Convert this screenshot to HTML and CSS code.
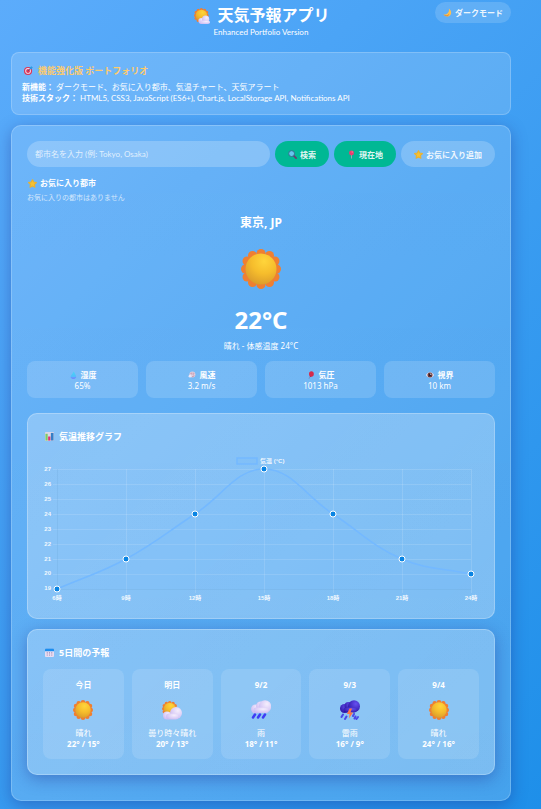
FILE: index.html
```html
<!DOCTYPE html>
<html lang="ja">
<head>
<meta charset="utf-8">
<meta name="viewport" content="width=device-width, initial-scale=1">
<title>天気予報アプリ</title>
<link rel="stylesheet" href="styles.css">
</head>
<body>
<svg class="sprite" aria-hidden="true">
  <defs>
    <radialGradient id="g-sun" cx=".6" cy=".25" r=".8"><stop offset="0" stop-color="#ffd53b"/><stop offset=".5" stop-color="#f6bd2c"/><stop offset="1" stop-color="#d99a2b"/></radialGradient>
    <radialGradient id="g-cloud" cx=".65" cy=".3" r=".8"><stop offset="0" stop-color="#f5eefd"/><stop offset="1" stop-color="#c9b8f2"/></radialGradient>
    <radialGradient id="g-storm" cx=".65" cy=".3" r=".8"><stop offset="0" stop-color="#6550f0"/><stop offset="1" stop-color="#2a12a0"/></radialGradient>
    <linearGradient id="g-drop" x1="0" y1="0" x2="0" y2="1"><stop offset="0" stop-color="#42d8f4"/><stop offset="1" stop-color="#5cb0ff"/></linearGradient>
    <symbol id="i-sun" viewBox="0 0 40 40">
      <g fill="#ef7f31"><circle cx="20" cy="4.5" r="4.5"/><circle cx="28.500" cy="6.500" r="4.500"/><circle cx="34" cy="12" r="4.500"/><circle cx="35.500" cy="20" r="4.500"/><circle cx="34" cy="28" r="4.500"/><circle cx="28.500" cy="33.500" r="4.500"/><circle cx="20" cy="35.500" r="4.500"/><circle cx="11.500" cy="33.500" r="4.500"/><circle cx="6" cy="28" r="4.500"/><circle cx="4.500" cy="20" r="4.500"/><circle cx="6" cy="12" r="4.500"/><circle cx="11.500" cy="6.500" r="4.500"/></g>
      <circle cx="20" cy="20" r="15.500" fill="url(#g-sun)"/>
    </symbol>
    <symbol id="i-suncloud" viewBox="0 0 40 40">
      <use href="#i-sun" x="0" y="2" width="31" height="31"/>
      <g fill="url(#g-cloud)"><circle cx="10" cy="31" r="8"/><circle cx="28" cy="26" r="12"/><rect x="8" y="27" width="25" height="12" rx="6"/></g>
    </symbol>
    <symbol id="i-suncloud-small" viewBox="0 0 40 40">
      <use href="#i-sun" x="0" y="0" width="37" height="37"/>
      <g fill="url(#g-cloud)"><circle cx="18" cy="32" r="7"/><circle cx="29" cy="28" r="9"/><rect x="13" y="31" width="27" height="9" rx="5"/></g>
    </symbol>
    <symbol id="i-rain" viewBox="0 0 40 40">
      <g fill="url(#g-cloud)"><circle cx="9" cy="18" r="9"/><circle cx="19" cy="12" r="9"/><circle cx="28" cy="13" r="12.500"/><rect x="5" y="15" width="30" height="11" rx="5"/></g>
      <path d="M8 29 4 35M18 29l-4 6M28 29l-4 6" stroke="#3f3cf5" stroke-width="5" stroke-linecap="round"/>
    </symbol>
    <symbol id="i-storm" viewBox="0 0 40 40">
      <g fill="url(#g-storm)"><circle cx="9" cy="17" r="9"/><circle cx="17" cy="12" r="8"/><circle cx="28" cy="12.500" r="12"/><rect x="7" y="15" width="26" height="10" rx="5"/></g>
      <path d="M6 29 3 34M13 33l-3 5M28 28l-2 4M36 34l-3 4M31 33l-2 4" stroke="#4a49e8" stroke-width="4" stroke-linecap="round"/>
      <path d="M19 17 14 28h5l-1 9 8-12h-5l3-8z" fill="#ff7548"/>
    </symbol>
    <symbol id="i-moon" viewBox="0 0 20 20"><path d="M13 1c5 4 7 10 3 15-4 4-11 4-15-2 7 2 14-4 12-13z" fill="#ffc04d"/><path d="M1 14c4 3 10 3 13-2 0 5-4 7-8 6-2-1-4-2-5-4z" fill="#e08b38"/></symbol>
    <symbol id="i-target" viewBox="0 0 20 20"><circle cx="9" cy="11" r="9" fill="#dc3557"/><circle cx="9" cy="11" r="6.300" fill="#f0e4f3"/><circle cx="9" cy="11" r="4.300" fill="#dc3557"/><path d="m9 11 6-6" stroke="#4d3a75" stroke-width="1.500"/><path d="m13 4 4-4v3h3l-4 4h-3z" fill="#2696df"/></symbol>
    <symbol id="i-star" viewBox="0 0 20 20"><path d="m10 1.500 2.800 5.300 6 1-4.300 4.200.9 6.300L10 15.500l-5.400 2.800.9-6.300L1.200 7.800l6-1z" fill="#f4c132" stroke="#e9b12f" stroke-width="2.400" stroke-linejoin="round"/></symbol>
    <symbol id="i-search" viewBox="0 0 20 20"><path d="m12 12 6 6" stroke="#683f73" stroke-width="4" stroke-linecap="round"/><circle cx="8" cy="8" r="6.500" fill="#65c6ed" stroke="#38658c" stroke-width="2"/></symbol>
    <symbol id="i-pin" viewBox="0 0 20 20"><path d="M10 9v10" stroke="#a9a1b7" stroke-width="2"/><circle cx="10" cy="6.500" r="5.500" fill="#ee3c70"/><circle cx="11.500" cy="4.500" r="1.500" fill="#ff82a0"/></symbol>
    <symbol id="i-drop" viewBox="0 0 20 20"><path d="M12 1c1 5 6 8 6 12 0 9-14 9-14 1 0-5 6-7 8-13z" fill="url(#g-drop)"/><path d="M4 15c3 2 10 2 14 0-1 6-13 6-14 0z" fill="#7481ff"/></symbol>
    <symbol id="i-wind" viewBox="0 0 20 20"><circle cx="11" cy="9" r="7.500" fill="#dfcede"/><circle cx="5" cy="13" r="3.500" fill="#eee5f5"/><path d="M6 6c3-2 5 0 4 3m3-5c2 2 2 4 0 5m-3 5c3 1 5-1 5-3" fill="none" stroke="#ba7790" stroke-width="1.600"/></symbol>
    <symbol id="i-balloon" viewBox="0 0 20 20"><path d="M8 14c-3 2 0 3-3 5" fill="none" stroke="#7b6e96" stroke-width="1.500"/><ellipse cx="11" cy="7.500" rx="6" ry="7" fill="#d52b4b"/><path d="m6 15 3-3 2 3z" fill="#b32452"/></symbol>
    <symbol id="i-eye" viewBox="0 0 20 20"><path d="M0 10c5-9 15-9 20 0-5 9-15 9-20 0z" fill="#f1e7f2"/><circle cx="10" cy="10" r="6.300" fill="#6e3b3b"/><circle cx="10" cy="10" r="3" fill="#291e30"/><circle cx="12" cy="8" r="1.500" fill="#fff"/></symbol>
    <symbol id="i-chart" viewBox="0 0 20 20"><rect width="20" height="20" rx="1.500" fill="#ddd7e7"/><path d="M1 4h5v15H1z" fill="#7dcc68"/><path d="M7 10h5v9H7z" fill="#df2f76"/><path d="M13 2h6v17h-6z" fill="#347ec6"/></symbol>
    <symbol id="i-calendar" viewBox="0 0 20 20"><rect y="1" width="20" height="19" rx="2" fill="#e7dcf1"/><path d="M0 7V3q0-2 2-2h16q2 0 2 2v4z" fill="#198ef0"/><path d="M5 9v8M10 9v8M15 9v8" stroke="#a28bb5" stroke-width="2" stroke-dasharray="2 1"/></symbol>
  </defs>
</svg>

<div class="page">
  <header class="header">
    <div class="brand">
      <h1 class="brand-title"><svg class="brand-icon" aria-hidden="true"><use href="#i-suncloud-small"/></svg>天気予報アプリ</h1>
      <p class="brand-sub">Enhanced Portfolio Version</p>
    </div>
    <button class="theme-btn" type="button"><svg class="icon" aria-hidden="true"><use href="#i-moon"/></svg>ダークモード</button>
  </header>

  <section class="intro">
    <h2 class="section-title accent"><svg class="icon" aria-hidden="true"><use href="#i-target"/></svg>機能強化版 ポートフォリオ</h2>
    <p><strong>新機能：</strong> ダークモード、お気に入り都市、気温チャート、天気アラート</p>
    <p><strong>技術スタック：</strong> HTML5, CSS3, JavaScript (ES6+), Chart.js, LocalStorage API, Notifications API</p>
  </section>

  <main class="weather">
    <form class="search">
      <input class="search-input" type="text" aria-label="都市名" placeholder="都市名を入力 (例: Tokyo, Osaka)">
      <button class="btn primary" type="button"><svg class="icon" aria-hidden="true"><use href="#i-search"/></svg>検索</button>
      <button class="btn primary" type="button"><svg class="icon" aria-hidden="true"><use href="#i-pin"/></svg>現在地</button>
      <button class="btn" type="button"><svg class="icon" aria-hidden="true"><use href="#i-star"/></svg>お気に入り追加</button>
    </form>

    <section class="favorites">
      <h2 class="favorites-title"><svg class="icon" aria-hidden="true"><use href="#i-star"/></svg>お気に入り都市</h2>
      <p class="favorites-empty">お気に入りの都市はありません</p>
    </section>

    <section class="current">
      <h2 class="city">東京, JP</h2>
      <svg class="current-icon" aria-hidden="true"><use href="#i-sun"/></svg>
      <p class="temperature">22°C</p>
      <p class="summary">晴れ - 体感温度 24°C</p>
    </section>

    <dl class="stats">
      <div class="stat"><dt><svg class="icon" aria-hidden="true"><use href="#i-drop"/></svg>湿度</dt><dd>65%</dd></div>
      <div class="stat"><dt><svg class="icon" aria-hidden="true"><use href="#i-wind"/></svg>風速</dt><dd>3.2 m/s</dd></div>
      <div class="stat"><dt><svg class="icon" aria-hidden="true"><use href="#i-balloon"/></svg>気圧</dt><dd>1013 hPa</dd></div>
      <div class="stat"><dt><svg class="icon" aria-hidden="true"><use href="#i-eye"/></svg>視界</dt><dd>10 km</dd></div>
    </dl>

    <section class="panel">
      <h2 class="section-title"><svg class="icon" aria-hidden="true"><use href="#i-chart"/></svg>気温推移グラフ</h2>
      <svg class="graph" viewBox="0 0 436 148" role="img" aria-label="気温 (°C)">
        <path class="grid" d="M10 14.500H428M10 29.500H428M10 44.500H428M10 59.500H428M10 74.500H428M10 89.500H428M10 104.500H428M10 119.500H428M83.500 14V138M152.500 14V138M221.500 14V138M290.500 14V138M359.500 14V138M428.500 14V138"/>
        <path class="axis" d="M14.500 14V138M10 134.500H428"/>
        <path class="area" d="M14 134C41.600 122 56.600 118.300 83 104C111.800 88.300 124.400 77 152 59C179.600 41 193.400 14 221 14C248.600 14 262.400 41 290 59C317.600 77 329.300 91.100 359 104C384.500 115.100 400.400 113 428 119V134H14Z"/>
        <path class="line" d="M14 134C41.600 122 56.600 118.300 83 104C111.800 88.300 124.400 77 152 59C179.600 41 193.400 14 221 14C248.600 14 262.400 41 290 59C317.600 77 329.300 91.100 359 104C384.500 115.100 400.400 113 428 119"/>
        <rect class="legend" x="194" y="3" width="20" height="6"/>
        <text x="217" y="8">気温 (°C)</text>
        <g class="points"><circle cx="14" cy="134" r="3"/><circle cx="83" cy="104" r="3"/><circle cx="152" cy="59" r="3"/><circle cx="221" cy="14" r="3"/><circle cx="290" cy="59" r="3"/><circle cx="359" cy="104" r="3"/><circle cx="428" cy="119" r="3"/></g>
        <g class="ticks-y"><text x="8" y="16">27</text><text x="8" y="31">26</text><text x="8" y="46">25</text><text x="8" y="61">24</text><text x="8" y="76">23</text><text x="8" y="91">22</text><text x="8" y="106">21</text><text x="8" y="120">20</text><text x="8" y="135">19</text></g>
        <g class="ticks-x"><text x="14" y="145">6時</text><text x="83" y="145">9時</text><text x="152" y="145">12時</text><text x="221" y="145">15時</text><text x="290" y="145">18時</text><text x="359" y="145">21時</text><text x="428" y="145">24時</text></g>
      </svg>
    </section>

    <section class="panel raised">
      <h2 class="section-title"><svg class="icon" aria-hidden="true"><use href="#i-calendar"/></svg>5日間の予報</h2>
      <ul class="days">
        <li class="day"><h3>今日</h3><svg class="day-icon" aria-hidden="true"><use href="#i-sun"/></svg><p>晴れ</p><strong>22° / 15°</strong></li>
        <li class="day"><h3>明日</h3><svg class="day-icon" aria-hidden="true"><use href="#i-suncloud"/></svg><p>曇り時々晴れ</p><strong>20° / 13°</strong></li>
        <li class="day"><h3>9/2</h3><svg class="day-icon" aria-hidden="true"><use href="#i-rain"/></svg><p>雨</p><strong>18° / 11°</strong></li>
        <li class="day"><h3>9/3</h3><svg class="day-icon" aria-hidden="true"><use href="#i-storm"/></svg><p>雷雨</p><strong>16° / 9°</strong></li>
        <li class="day"><h3>9/4</h3><svg class="day-icon" aria-hidden="true"><use href="#i-sun"/></svg><p>晴れ</p><strong>24° / 16°</strong></li>
      </ul>
    </section>
  </main>
</div>
</body>
</html>
```
FILE: styles.css
```css
* {
  box-sizing: border-box;
  margin: 0;
  padding: 0;
}

body {
  min-height: 100vh;
  background: linear-gradient(135deg, #5cacfb, #1e8fe9);
  color: #fff;
  font-family: "Noto Sans", "Noto Sans CJK JP", sans-serif;
  font-size: 8px;
  line-height: 11px;
}

button,
input {
  border: 0;
  color: inherit;
  font: inherit;
}

.sprite {
  position: absolute;
  width: 0;
  height: 0;
}

.page {
  padding: 2px 30px 8px 11px;
}

.icon {
  flex: none;
  width: 9px;
  height: 9px;
}

/* Header */
.header {
  display: grid;
  grid-template-columns: 1fr auto 1fr;
  margin-bottom: 14px;
}

.brand {
  grid-column: 2;
  padding-top: 3px;
  text-align: center;
}

.brand-title {
  display: flex;
  align-items: center;
  justify-content: center;
  gap: 7px;
  padding-left: 2px;
  font-size: 16px;
  line-height: 21px;
}

.brand-icon {
  width: 16px;
  height: 16px;
}

.brand-sub,
.intro p,
.search-input {
  font-family: Lato, "Noto Sans CJK JP", sans-serif;
}

.brand-sub {
  line-height: 12px;
}

.theme-btn {
  display: flex;
  align-items: center;
  justify-self: end;
  align-self: start;
  gap: 3px;
  height: 21px;
  padding: 0 8px;
  border-radius: 11px;
  background: rgba(255, 255, 255, .15);
  font-weight: 700;
  color: rgba(255, 255, 255, .9);
}

/* Intro */
.intro {
  padding: 10px;
  margin-bottom: 10px;
  border: 1px solid rgba(255, 255, 255, .2);
  border-radius: 8px;
  background: rgba(255, 255, 255, .15);
}

.section-title {
  display: flex;
  align-items: center;
  gap: 5px;
  padding-left: 2px;
  font-size: 9px;
  line-height: 15px;
}

.accent {
  margin-bottom: 4px;
  color: #fdcb6e;
}

/* Main card */
.weather {
  padding: 15px 15px 25px;
  border: 1px solid rgba(255, 255, 255, .2);
  border-radius: 10px;
  background: linear-gradient(rgba(255, 255, 255, .15), rgba(255, 255, 255, .17));
  box-shadow: 0 4px 16px rgba(31, 38, 135, .37);
}

.search {
  display: flex;
  gap: 5px;
}

.search-input {
  flex: 1;
  min-width: 0;
  height: 26px;
  padding: 0 8px;
  border-radius: 13px;
  background: rgba(255, 255, 255, .22);
}

.search-input::placeholder {
  color: rgba(255, 255, 255, .75);
}

.btn {
  display: flex;
  align-items: center;
  gap: 3px;
  height: 26px;
  padding: 0 13px;
  border-radius: 13px;
  background: rgba(255, 255, 255, .2);
  font-weight: 700;
  color: rgba(255, 255, 255, .9);
}

.primary {
  background: #00b894;
}

.favorites {
  margin-top: 10px;
}

.favorites-title {
  display: flex;
  align-items: center;
  gap: 3px;
  padding-left: 1px;
  margin-bottom: 3px;
  font-size: 8px;
  line-height: 12px;
}

.favorites-empty {
  font-size: 7px;
  line-height: 12px;
  opacity: .7;
}

.current {
  display: flex;
  flex-direction: column;
  align-items: center;
  margin-top: 10px;
}

.city {
  font-size: 12px;
  line-height: 18px;
}

.current-icon {
  width: 40px;
  height: 40px;
  margin: 17px 0 13px;
}

.temperature {
  font-size: 24px;
  font-weight: 700;
  line-height: 36px;
}

.summary {
  line-height: 15px;
}

.stats {
  display: grid;
  grid-template-columns: repeat(4, 1fr);
  gap: 8px;
  margin: 8px 0 15px;
}

.stat {
  padding: 8px 8px 7px;
  border-radius: 8px;
  background: rgba(255, 255, 255, .15);
  text-align: center;
}

.stat dt {
  display: flex;
  align-items: center;
  justify-content: center;
  gap: 4px;
  font-weight: 700;
}

.stat .icon {
  width: 8px;
  height: 8px;
}

/* Panels */
.panel {
  padding: 15px;
  border: 1px solid rgba(255, 255, 255, .25);
  border-radius: 10px;
  background: linear-gradient(135deg, rgba(255, 255, 255, .26), rgba(255, 255, 255, .28));
}

.raised {
  margin-top: 10px;
  box-shadow: 0 4px 16px rgba(31, 38, 135, .37);
}

.graph {
  display: block;
  width: 100%;
  height: auto;
  margin-top: 11px;
  fill: rgba(255, 255, 255, .9);
  font-family: "Liberation Sans", "Noto Sans CJK JP", sans-serif;
  font-size: 6px;
  font-weight: 700;
}

.grid,
.axis {
  fill: none;
  stroke: rgba(255, 255, 255, .13);
}

.axis {
  stroke: rgba(100, 160, 210, .2);
}

.area {
  fill: rgba(116, 185, 255, .1);
}

.line,
.legend {
  fill: none;
  stroke: #74b9ff;
  stroke-width: 1.5px;
}

.legend {
  fill: rgba(116, 185, 255, .2);
}

.points {
  fill: #0984e3;
  stroke: #fff;
}

.ticks-y {
  text-anchor: end;
}

.ticks-x {
  text-anchor: middle;
}

.days {
  display: grid;
  grid-template-columns: repeat(5, 1fr);
  gap: 8px;
  margin-top: 9px;
  list-style: none;
}

.day {
  display: flex;
  flex-direction: column;
  align-items: center;
  padding: 10px 4px;
  border-radius: 8px;
  background: rgba(255, 255, 255, .12);
}

.day h3 {
  font-size: 8px;
  line-height: 12px;
}

.day-icon {
  width: 20px;
  height: 20px;
  margin: 9px 0 7px;
}
```
